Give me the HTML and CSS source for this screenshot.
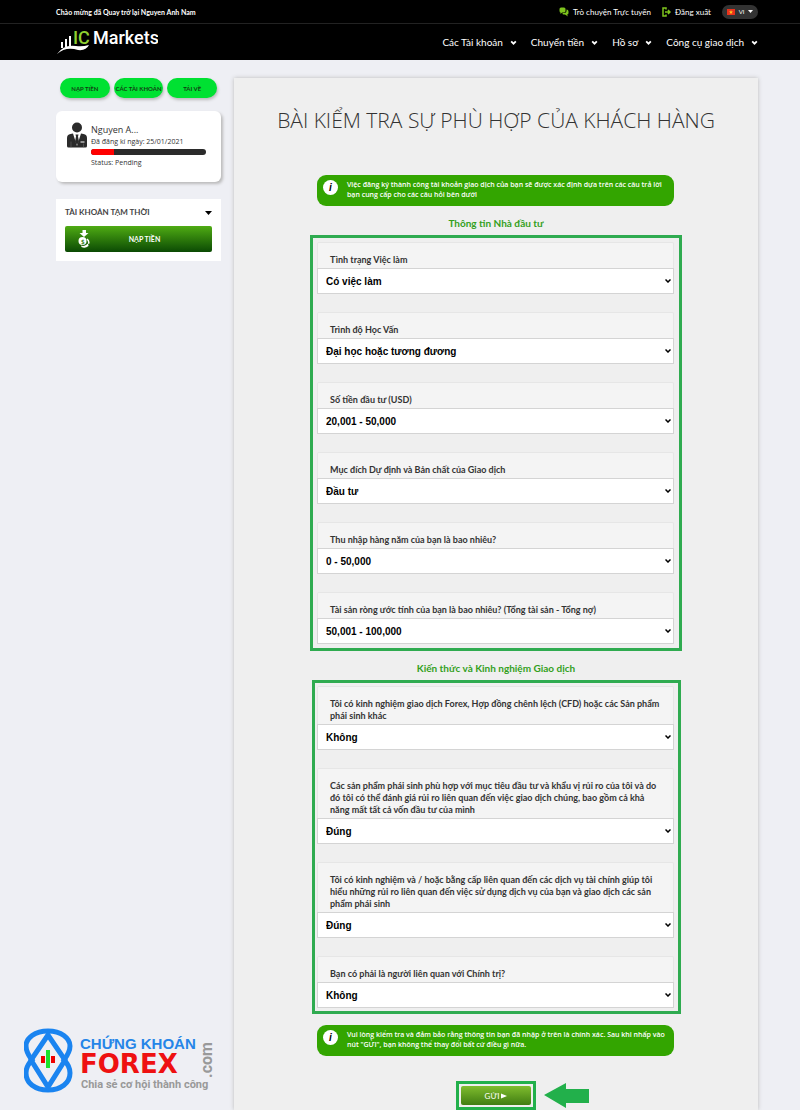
FILE: index.html
```html
<!DOCTYPE html>
<html lang="vi">
<head>
    <meta charset="UTF-8">
    <meta name="viewport" content="width=device-width, initial-scale=1.0">
    <title>IC Markets</title>
    <link rel="stylesheet" href="styles.css">
</head>
<body>
    <header>
        <div class="topbar">
            <p class="welcome">Chào mừng đã Quay trở lại Nguyen Anh Nam</p>
            <div class="topLinks">
                <a href="#" class="chat">
                    <svg width="10" height="10" viewBox="0 0 20 20" fill="#7ec41d"><rect x="1" y="1" width="12" height="10" rx="3"/><path d="M3 10v4l4-4zM15 5q4 0 4 4v3q0 3-3 3l2 4-6-4H9q-2 0-2-3h4q4 0 4-4z"/></svg>
                    Trò chuyện Trực tuyến
                </a>
                <a href="#" class="logout">
                    <svg width="9" height="10" viewBox="0 0 18 20" fill="none" stroke="#7ec41d" stroke-width="3"><path d="M8 5V2H2v16h6v-3M6 10h10M12 6l4 4-4 4"/></svg>
                    Đăng xuất
                </a>
                <button type="button" class="lang">
                    <svg width="8" height="6" viewBox="0 0 16 12"><rect width="16" height="12" fill="#e8321c"/><path d="M8 2l1 3h3L9.600 7l1 3L8 8l-2.600 2 1-3L4 5h3z" fill="#ffd21f"/></svg>
                    VI
                    <svg width="5" height="3" viewBox="0 0 10 6" fill="#fff"><path d="M0 0h10L5 6z"/></svg>
                </button>
            </div>
        </div>
        <div class="navbar">
            <a href="#" class="logo">
                <svg width="102" height="28" viewBox="0 0 102 28" role="img" aria-label="IC Markets">
                    <g fill="#fff">
                        <rect x="5" y="14" width="2" height="6"/>
                        <rect x="9" y="11" width="2" height="8"/>
                        <rect x="13" y="8" width="2" height="10"/>
                        <path d="M1 26Q8 16 20 18q6 1 13-1-3 6-11 5-12-4-21 4z"/>
                    </g>
                    <text x="17" y="16" class="logoIc">IC</text>
                    <text x="37" y="16" class="logoName">Markets</text>
                </svg>
            </a>
            <nav>
                <a href="#">Các Tài khoản <svg class="chev" viewBox="0 0 12 8"><path d="M2 2l4 4 4-4"/></svg></a>
                <a href="#">Chuyển tiền <svg class="chev" viewBox="0 0 12 8"><path d="M2 2l4 4 4-4"/></svg></a>
                <a href="#">Hồ sơ <svg class="chev" viewBox="0 0 12 8"><path d="M2 2l4 4 4-4"/></svg></a>
                <a href="#">Công cụ giao dịch <svg class="chev" viewBox="0 0 12 8"><path d="M2 2l4 4 4-4"/></svg></a>
            </nav>
        </div>
    </header>

    <div class="wrapper">
        <aside>
            <div class="pills">
                <button type="button">NẠP TIỀN</button>
                <button type="button">CÁC TÀI KHOẢN</button>
                <button type="button">TẢI VỀ</button>
            </div>

            <div class="profile">
                <svg width="20" height="26" viewBox="0 0 40 52" fill="#2b2b2b"><circle cx="20" cy="11" r="10"/><path d="M0 48V32q0-7 7-8l5-1 8 25 8-25 5 1q7 1 7 8v16q0 3-3 3H3q-3 0-3-3z"/><path d="M17 25h6l-1 4 2 10-4 7-4-7 2-10z"/><path d="M27 40h8" stroke="#fff" stroke-width="2"/><path d="M8 39v12M33 43v8" stroke="#777" stroke-width="1"/></svg>
                <div class="profileInfo">
                    <h2>Nguyen A...</h2>
                    <p>Đã đăng kí ngày: 25/01/2021</p>
                    <div class="progress"><div class="bar"></div></div>
                    <p>Status: Pending</p>
                </div>
            </div>

            <div class="account">
                <div class="accountHead">
                    <h3>TÀI KHOẢN TẠM THỜI</h3>
                    <svg width="7" height="4" viewBox="0 0 14 8"><path d="M0 0h14L7 8z"/></svg>
                </div>
                <button type="button" class="deposit">
                    <svg width="12" height="18" viewBox="0 0 24 36" fill="#fff"><path d="M9 0h7v6h5l-9 8-9-8h6z"/><circle cx="9" cy="22" r="8"/><path d="M19 17q5 4 4 10l-3 1q1-6-3-9zM6 31q5 2 10-1l4-3 1 5q-7 6-14 2z"/><text x="6" y="27" class="coin">$</text></svg>
                    <span>NẠP TIỀN</span>
                </button>
            </div>
        </aside>

        <main>
            <h1>BÀI KIỂM TRA SỰ PHÙ HỢP CỦA KHÁCH HÀNG</h1>

            <form action="#">
                <div class="notice">
                    <span class="info">i</span>
                    <p>Việc đăng ký thành công tài khoản giao dịch của bạn sẽ được xác định dựa trên các câu trả lời<br>bạn cung cấp cho các câu hỏi bên dưới</p>
                </div>

                <h2 class="sectionTitle">Thông tin Nhà đầu tư</h2>
                <div class="group investor">
                    <div class="field">
                        <label for="job">Tình trạng Việc làm</label>
                        <select id="job"><option>Có việc làm</option></select>
                    </div>
                    <div class="field">
                        <label for="education">Trình độ Học Vấn</label>
                        <select id="education"><option>Đại học hoặc tương đương</option></select>
                    </div>
                    <div class="field">
                        <label for="amount">Số tiền đầu tư (USD)</label>
                        <select id="amount"><option>20,001 - 50,000</option></select>
                    </div>
                    <div class="field">
                        <label for="purpose">Mục đích Dự định và Bản chất của Giao dịch</label>
                        <select id="purpose"><option>Đầu tư</option></select>
                    </div>
                    <div class="field">
                        <label for="income">Thu nhập hàng năm của bạn là bao nhiêu?</label>
                        <select id="income"><option>0 - 50,000</option></select>
                    </div>
                    <div class="field">
                        <label for="networth">Tài sản ròng ước tính của bạn là bao nhiêu? (Tổng tài sản - Tổng nợ)</label>
                        <select id="networth"><option>50,001 - 100,000</option></select>
                    </div>
                </div>

                <h2 class="sectionTitle">Kiến thức và Kinh nghiệm Giao dịch</h2>
                <div class="group experience">
                    <div class="field">
                        <label for="cfd">Tôi có kinh nghiệm giao dịch Forex, Hợp đồng chênh lệch (CFD) hoặc các Sản phẩm phái sinh khác</label>
                        <select id="cfd"><option>Không</option></select>
                    </div>
                    <div class="field">
                        <label for="risk">Các sản phẩm phái sinh phù hợp với mục tiêu đầu tư và khẩu vị rủi ro của tôi và do đó tôi có thể đánh giá rủi ro liên quan đến việc giao dịch chúng, bao gồm cả khả năng mất tất cả vốn đầu tư của mình</label>
                        <select id="risk"><option>Đúng</option></select>
                    </div>
                    <div class="field">
                        <label for="degree">Tôi có kinh nghiệm và / hoặc bằng cấp liên quan đến các dịch vụ tài chính giúp tôi hiểu những rủi ro liên quan đến việc sử dụng dịch vụ của bạn và giao dịch các sản phẩm phái sinh</label>
                        <select id="degree"><option>Đúng</option></select>
                    </div>
                    <div class="field">
                        <label for="politics">Bạn có phải là người liên quan với Chính trị?</label>
                        <select id="politics"><option>Không</option></select>
                    </div>
                </div>

                <div class="notice last">
                    <span class="info">i</span>
                    <p>Vui lòng kiểm tra và đảm bảo rằng thông tin bạn đã nhập ở trên là chính xác. Sau khi nhấp vào<br>nút "GỬI", bạn không thể thay đổi bất cứ điều gì nữa.</p>
                </div>

                <div class="submitRow">
                    <div class="submitBox"><button type="submit">GỬI <svg width="6" height="6" viewBox="0 0 12 12" fill="#fff"><path d="M0 1l12 5-12 5z"/></svg></button></div>
                    <svg class="arrow" width="45" height="25" viewBox="0 0 45 25" fill="#22b04b"><path d="M0 12L22 0v6h23v14H22v5z"/></svg>
                </div>
            </form>
        </main>
    </div>

    <div class="watermark">
        <svg width="196" height="68" viewBox="0 0 196 68" role="img" aria-label="Chứng khoán Forex.com">
            <g fill="none" stroke="#1a84f0" stroke-width="5">
                <path d="M24 4C11 4 2 11 2 19c0 6 3 10 6 14-4 4-6 8-6 13 0 10 9 17 22 17s22-7 22-17c0-5-2-9-6-13 3-4 6-8 6-14C46 11 37 4 24 4z"/>
                <path d="M24 8L7 33l17 27 17-27z"/>
            </g>
            <rect x="17" y="29" width="4" height="7" fill="#e00"/>
            <rect x="27" y="29" width="4" height="7" fill="#e00"/>
            <rect x="22" y="23" width="4" height="18" fill="#1be32a"/>
            <text x="56" y="22" class="wmTop">CHỨNG KHOÁN</text>
            <text x="56" y="46" class="wmForex">FOREX</text>
            <text x="57" y="61" class="wmSlogan">Chia sẻ cơ hội thành công</text>
            <text x="-51" y="188" class="wmCom" transform="rotate(-90)">.com</text>
        </svg>
    </div>
</body>
</html>
```
FILE: styles.css
```css
*{
    margin: 0;
    padding: 0;
    box-sizing: border-box;
}
body{
    background-color: #eeeff4;
    color: #333;
    font-family: Lato, "Open Sans", sans-serif;
    font-size: 9px;
}
a{
    color: #fff;
    text-decoration: none;
}
button{
    border: none;
    font-family: inherit;
    cursor: pointer;
}
svg{
    flex-shrink: 0;
}

/* header */
header{
    background-color: #000;
    color: #fff;
}
.topbar,
.navbar{
    display: flex;
    align-items: center;
    justify-content: space-between;
    padding: 0 42px 0 56px;
}
.topbar{
    height: 24px;
    border-bottom: 1px solid #222;
}
.welcome{
    font-size: 7px;
    font-weight: 700;
}
.topLinks{
    display: flex;
    align-items: center;
    gap: 11px;
    font-size: 8px;
}
.topLinks a{
    display: flex;
    align-items: center;
    gap: 4px;
}
.lang{
    display: flex;
    align-items: center;
    justify-content: center;
    gap: 4px;
    width: 36px;
    height: 14px;
    border-radius: 7px;
    background-color: #333;
    color: #fff;
    font-size: 6px;
}
.navbar{
    height: 36px;
}
.logo svg{
    display: block;
}
.logoIc,
.logoName{
    font-family: Roboto, sans-serif;
    font-size: 18px;
    font-weight: 500;
    fill: #fff;
}
.logoIc{
    fill: #8fd031;
}
nav{
    display: flex;
    gap: 14px;
    font-size: 10px;
}
nav a{
    display: flex;
    align-items: center;
    gap: 7px;
}
.chev{
    width: 7px;
    height: 5px;
    fill: none;
    stroke: #fff;
    stroke-width: 3px;
}

/* page */
.wrapper{
    display: flex;
    gap: 13px;
    padding: 18px 42px 0 56px;
}
aside{
    width: 165px;
    flex-shrink: 0;
}
.pills{
    display: flex;
    gap: 4px;
    padding: 0 4px;
    margin-bottom: 13px;
}
.pills button{
    flex: 1 1 0;
    min-width: 0;
    height: 20px;
    border-radius: 10px;
    background-color: #00e132;
    color: #123c12;
    font-size: 6px;
    font-weight: 700;
    white-space: nowrap;
    box-shadow: 1px 2px 3px #bbb;
}
.profile{
    display: flex;
    gap: 4px;
    padding: 11px 15px 14px 11px;
    margin-bottom: 17px;
    border-radius: 6px;
    background-color: #fff;
    box-shadow: 2px 2px 3px #bbb;
}
.profileInfo{
    flex: 1;
    font-family: "Open Sans", sans-serif;
    font-size: 7px;
    line-height: 10px;
}
.profileInfo h2{
    font-size: 9px;
    font-weight: 400;
    line-height: 14px;
    padding-top: 1px;
}
.progress{
    height: 6px;
    margin: 2px 0 3px;
    border-radius: 3px;
    background-color: #2b2b2b;
    overflow: hidden;
}
.bar{
    width: 20%;
    height: 100%;
    background-color: #f00;
}
.account{
    padding: 8px 9px 9px;
    background-color: #fff;
}
.accountHead{
    display: flex;
    align-items: center;
    justify-content: space-between;
    margin-bottom: 8px;
}
.accountHead h3{
    color: #444;
    font-size: 8px;
    font-weight: 700;
    line-height: 11px;
}
.deposit{
    display: flex;
    align-items: center;
    width: 100%;
    height: 26px;
    padding: 0 13px;
    border-radius: 2px;
    background: linear-gradient(#4fab13, #0b4a04);
    color: #fff;
    font-size: 7px;
    font-weight: 700;
}
.deposit span{
    flex: 1;
}
.coin{
    font-size: 12px;
    fill: #287a0c;
}

/* questionnaire */
main{
    flex: 1;
    min-width: 0;
    padding: 27px 76px 0;
    background-color: #efefef;
    box-shadow: 0 0 4px #bbb;
}
h1{
    margin: 0 -60px 40px;
    font-family: "Open Sans", sans-serif;
    font-size: 21px;
    font-weight: 300;
    line-height: 30px;
    text-align: center;
}
.notice{
    display: flex;
    align-items: flex-start;
    gap: 9px;
    margin: 0 8px 0 7px;
    padding: 5px 2px 6px 6px;
    border-radius: 9px;
    background-color: #33a500;
    color: #fff;
    font-family: "Open Sans", sans-serif;
    font-size: 7px;
    font-weight: 600;
    line-height: 10px;
}
.info{
    flex-shrink: 0;
    width: 15px;
    height: 15px;
    border-radius: 50%;
    background-color: #fff;
    color: #000;
    font-family: "Liberation Sans", sans-serif;
    font-size: 10px;
    font-style: italic;
    font-weight: 700;
    line-height: 15px;
    text-align: center;
}
.sectionTitle{
    padding: 10px 0 4px;
    color: #33a01c;
    font-size: 10px;
    font-weight: 700;
    line-height: 15px;
    text-align: center;
}
.group{
    border: 3px solid #2fab50;
}
.investor{
    padding: 4px 5px 4px 4px;
}
.experience{
    margin: 0 1px 0 2px;
    padding: 3px 4px 3px 2px;
}
.field{
    margin-bottom: 18px;
}
.field:last-child{
    margin-bottom: 0;
}
.field label{
    display: block;
    padding: 11px 12px 2px;
    border: 1px solid #e6e6e6;
    border-bottom: none;
    border-radius: 2px 2px 0 0;
    background-color: #f4f4f4;
    font-size: 9px;
    font-weight: 700;
    line-height: 12px;
}
.field select{
    display: block;
    width: 100%;
    height: 26px;
    padding: 0 20px 0 8px;
    border: 1px solid #d4d4d4;
    border-radius: 0;
    appearance: none;
    background: #fff url("data:image/svg+xml,%3Csvg xmlns='http://www.w3.org/2000/svg' viewBox='0 0 12 8'%3E%3Cpath d='M1 1l5 5 5-5' fill='none' stroke='%23000' stroke-width='3'/%3E%3C/svg%3E") no-repeat right 2px center / 6px 4px;
    color: #000;
    font-family: "Liberation Sans", sans-serif;
    font-size: 10px;
    font-weight: 700;
}
.last{
    margin-top: 11px;
}
.submitRow{
    display: grid;
    grid-template-columns: 1fr auto 1fr;
    align-items: center;
    gap: 8px;
    margin-top: 25px;
}
.submitBox{
    grid-column: 2;
    padding: 2px;
    border: 3px solid #22b04b;
}
.submitBox button{
    display: block;
    width: 70px;
    height: 19px;
    border-radius: 2px;
    background: linear-gradient(#80bd2e, #407d12);
    color: #fff;
    font-size: 8px;
}

/* site mark over the page corner */
.watermark{
    position: absolute;
    left: 24px;
    top: 1027px;
}
.watermark svg{
    display: block;
}
.wmTop{
    font: 700 15px "Liberation Sans", sans-serif;
    fill: #2585e8;
}
.wmForex{
    font: 700 26px "DejaVu Sans", sans-serif;
    fill: #ee1111;
}
.wmSlogan{
    font: 700 11px Roboto, sans-serif;
    fill: #999;
}
.wmCom{
    font: 700 16px Roboto, sans-serif;
    fill: #999;
}
```
